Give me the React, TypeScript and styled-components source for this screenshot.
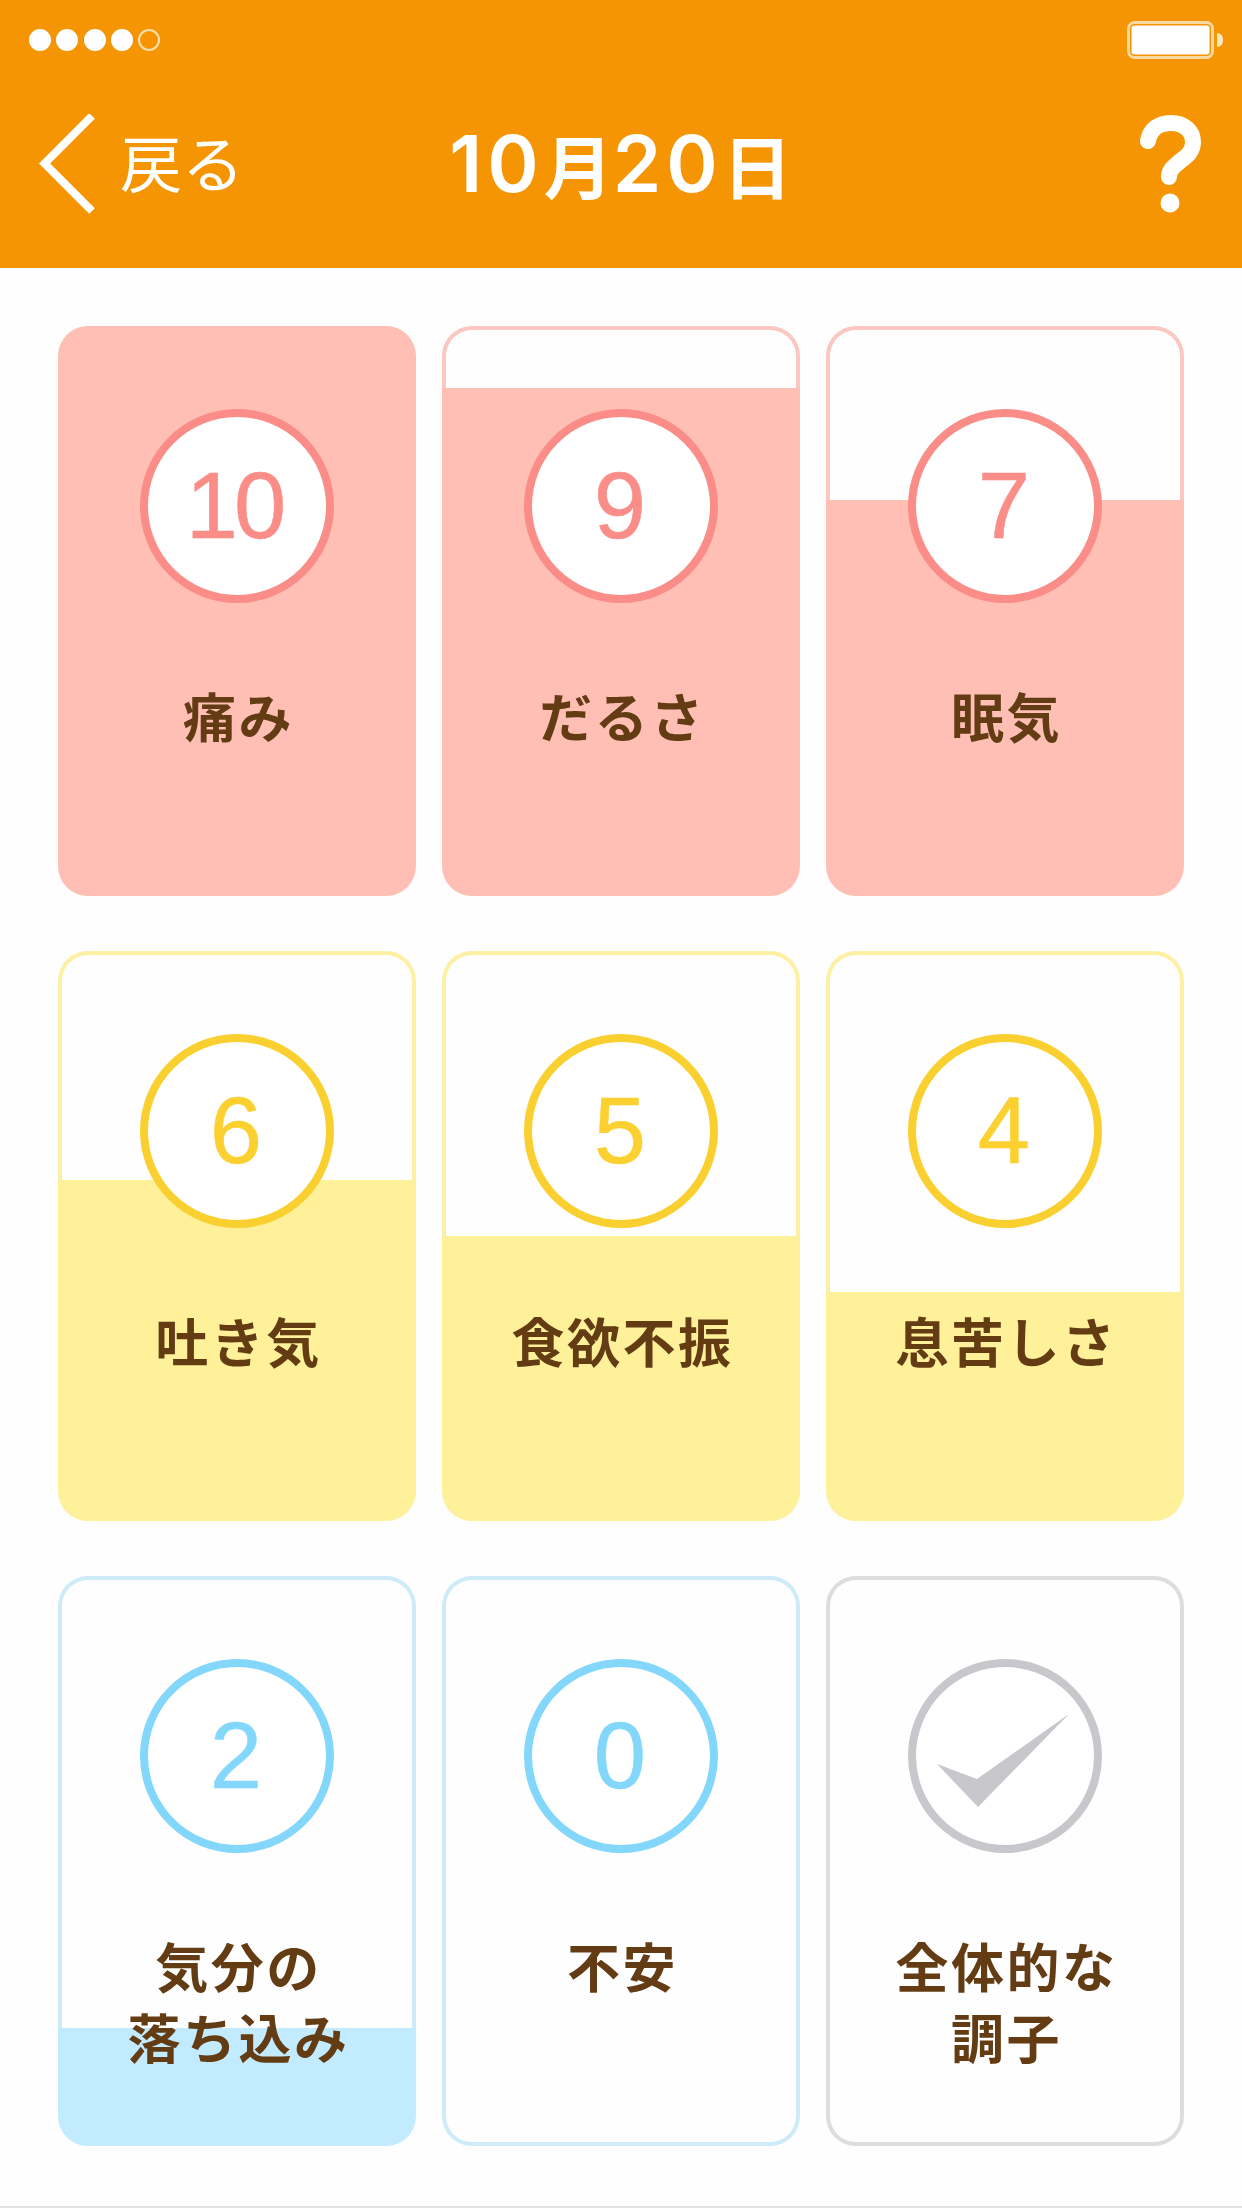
import React from "react";
import styled, { createGlobalStyle } from "styled-components";

const Global = createGlobalStyle`
  html, body { margin: 0; padding: 0; background: #fff; }
  * { box-sizing: border-box; }
`;

const JP = `"Noto Sans CJK JP", "Liberation Sans", sans-serif`;

const Page = styled.div`
  width: 1242px;
  height: 2208px;
  background: #fefefe;
  display: flex;
  flex-direction: column;
  border-bottom: 2px solid #e4e2e6;
  overflow: hidden;
`;

const Header = styled.header`
  height: 268px;
  background: #f59503;
  display: flex;
  flex-direction: column;
  color: #fff;
`;

const StatusBar = styled.div`
  height: 78px;
  padding: 21px 19px 0 29px;
  display: flex;
  justify-content: space-between;
  align-items: flex-start;
`;

const Signal = styled.div`
  display: flex;
  gap: 5.3px;
  padding-top: 8px;
`;

const SignalDot = styled.span<{ $on: boolean }>`
  width: 22px;
  height: 22px;
  border-radius: 50%;
  border: 2px solid ${(p) => (p.$on ? "#fff" : "#fde0ad")};
  background: ${(p) => (p.$on ? "#fff" : "transparent")};
`;

const Nav = styled.nav`
  flex: 1;
  padding: 37px 40px 54px 39px;
  display: grid;
  grid-template-columns: 1fr auto 1fr;
  align-items: center;
`;

const Back = styled.div`
  display: flex;
  align-items: center;
  gap: 25px;
`;

const BackLabel = styled.span`
  font-family: ${JP};
  font-weight: 400;
  font-size: 62px;
  line-height: 1;
  margin-bottom: 6px;
`;

const Title = styled.h1`
  margin: 0;
  font-family: ${JP};
  font-weight: 700;
  font-size: 69px;
  line-height: 1;
  display: flex;
  align-items: center;
`;

const TitleDigits = styled.span`
  font-family: Inter, "Liberation Sans", sans-serif;
  font-weight: 600;
  font-size: 78px;
  letter-spacing: 5px;
`;

const Help = styled.div`
  justify-self: end;
  display: flex;
`;

const Grid = styled.main`
  padding: 58px 58px 0;
  display: grid;
  grid-template-columns: repeat(3, 358px);
  grid-auto-rows: 570px;
  column-gap: 26px;
  row-gap: 55px;
`;

type Tone = "pink" | "yellow" | "blue" | "gray";

const tones: Record<Tone, { fill: string; ring: string; edge: string; num: string }> = {
  pink: { fill: "#ffbfb5", ring: "#fa8d87", edge: "#fbc7c0", num: "#fa8d87" },
  yellow: { fill: "#fff09a", ring: "#f9d02f", edge: "#fdf0a2", num: "#fbd030" },
  blue: { fill: "#c3ebff", ring: "#82d7fb", edge: "#cdebf9", num: "#82d7fb" },
  gray: { fill: "#fefefe", ring: "#c8c8cc", edge: "#dddde0", num: "#c8c8cc" },
};

const fillHeight = (level: number) => (level >= 10 ? 570 : level > 0 ? 6.5 + 55.7 * level : 0);

const Card = styled.article<{ $tone: Tone; $level: number }>`
  border-radius: 30px;
  border: 4px solid transparent;
  padding-top: 79px;
  display: flex;
  flex-direction: column;
  align-items: center;
  background:
    linear-gradient(
        to top,
        ${(p) => tones[p.$tone].fill} ${(p) => fillHeight(p.$level) - 4}px,
        #fefefe ${(p) => fillHeight(p.$level) - 4}px
      )
      padding-box,
    linear-gradient(
        to top,
        ${(p) => tones[p.$tone].fill} ${(p) => fillHeight(p.$level)}px,
        ${(p) => tones[p.$tone].edge} ${(p) => fillHeight(p.$level)}px
      )
      border-box;
`;

const Ring = styled.div<{ $tone: Tone }>`
  width: 194px;
  height: 194px;
  flex: none;
  border-radius: 50%;
  border: 8px solid ${(p) => tones[p.$tone].ring};
  background: #fff;
  display: flex;
  align-items: center;
  justify-content: center;
`;

const Score = styled.span<{ $tone: Tone }>`
  font-family: "Liberation Sans", Arial, sans-serif;
  font-size: 94px;
  line-height: 1;
  letter-spacing: -4px;
  padding-right: 6px;
  -webkit-text-stroke: 0.5px ${(p) => tones[p.$tone].num};
  color: ${(p) => tones[p.$tone].num};
`;

const Label = styled.div`
  margin-top: 77px;
  padding-left: 3px;
  font-family: ${JP};
  font-weight: 700;
  font-size: 53px;
  line-height: 71px;
  letter-spacing: 2.5px;
  color: #643c14;
  text-align: center;
`;

const items: { tone: Tone; value?: number; label: string[] }[] = [
  { tone: "pink", value: 10, label: ["痛み"] },
  { tone: "pink", value: 9, label: ["だるさ"] },
  { tone: "pink", value: 7, label: ["眠気"] },
  { tone: "yellow", value: 6, label: ["吐き気"] },
  { tone: "yellow", value: 5, label: ["食欲不振"] },
  { tone: "yellow", value: 4, label: ["息苦しさ"] },
  { tone: "blue", value: 2, label: ["気分の", "落ち込み"] },
  { tone: "blue", value: 0, label: ["不安"] },
  { tone: "gray", label: ["全体的な", "調子"] },
];

export default function App() {
  return (
    <Page>
      <Global />
      <Header>
        <StatusBar>
          <Signal>
            {[true, true, true, true, false].map((on, i) => (
              <SignalDot key={i} $on={on} />
            ))}
          </Signal>
          <svg width="96" height="38" viewBox="0 0 96 38">
            <rect x="1.5" y="1.5" width="84" height="35" rx="6" fill="none" stroke="#fdd9a0" strokeWidth="3" />
            <rect x="4.5" y="4.5" width="78" height="29" rx="3" fill="#fff" />
            <path d="M90 12c4 0 6 3 6 7s-2 7-6 7z" fill="#fde6c0" />
          </svg>
        </StatusBar>
        <Nav>
          <Back>
            <svg width="56" height="100" viewBox="0 0 56 100">
              <path d="M53 2 5.6 49.5 53 97" fill="none" stroke="#fff" strokeWidth="8" />
            </svg>
            <BackLabel>戻る</BackLabel>
          </Back>
          <Title>
            <TitleDigits>10</TitleDigits>月<TitleDigits>20</TitleDigits>日
          </Title>
          <Help>
            <svg width="62" height="98" viewBox="0 0 62 98">
              <path
                d="M8 26C10 14 19 8 31 8c13 0 22 8 22 19 0 11-8 15-15 21-6 5-9 8-9 14"
                fill="none"
                stroke="#fff"
                strokeWidth="16"
                strokeLinecap="round"
              />
              <circle cx="30" cy="88" r="9.5" fill="#fff" />
            </svg>
          </Help>
        </Nav>
      </Header>
      <Grid>
        {items.map((item) => (
          <Card key={item.label.join("")} $tone={item.tone} $level={item.value ?? 0}>
            <Ring $tone={item.tone}>
              {item.value !== undefined ? (
                <Score $tone={item.tone}>{item.value}</Score>
              ) : (
                <svg width="136" height="104" viewBox="0 0 136 104">
                  <path d="M0 60 40 75 132 10 41 103z" fill="#c8c8cc" />
                </svg>
              )}
            </Ring>
            <Label>
              {item.label.map((line) => (
                <div key={line}>{line}</div>
              ))}
            </Label>
          </Card>
        ))}
      </Grid>
    </Page>
  );
}
